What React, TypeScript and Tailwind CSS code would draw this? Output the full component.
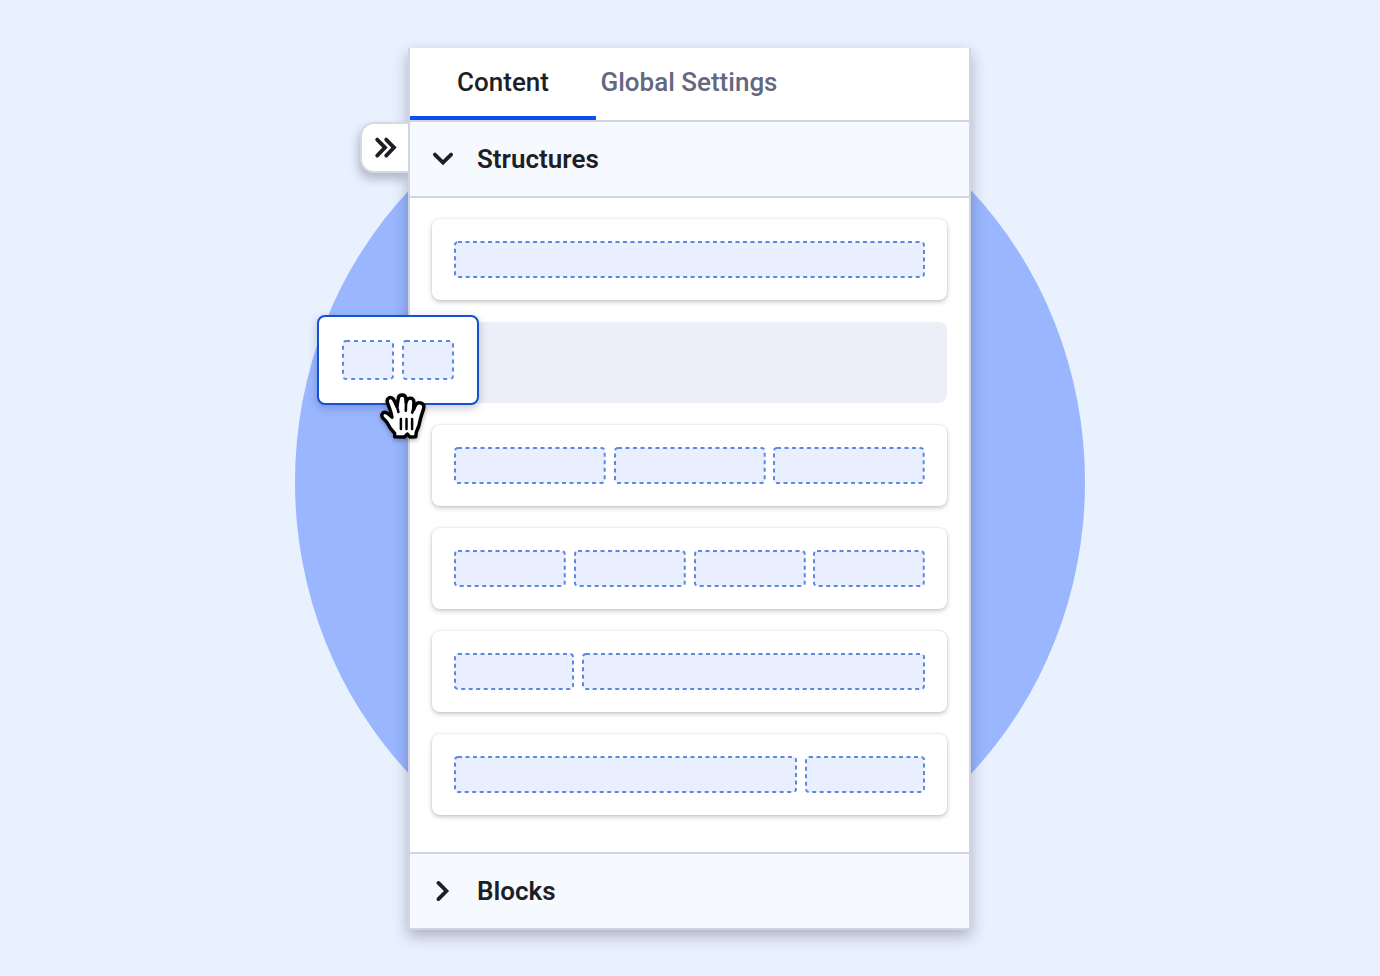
import { useState } from 'react'
import clsx from 'clsx'

type Structure = {
  id: string
  name: string
  cells: string[]
}

const STRUCTURES: Structure[] = [
  { id: 'one', name: 'One column', cells: ['flex-1'] },
  { id: 'two', name: 'Two columns', cells: ['flex-1', 'flex-1'] },
  { id: 'three', name: 'Three columns', cells: ['flex-1', 'flex-1', 'flex-1'] },
  { id: 'four', name: 'Four columns', cells: ['flex-1', 'flex-1', 'flex-1', 'flex-1'] },
  { id: 'left', name: 'Narrow left column', cells: ['w-[120px]', 'flex-1'] },
  { id: 'right', name: 'Narrow right column', cells: ['flex-1', 'w-[120px]'] },
]

const DRAGGED_ID = 'two'

function Cell({ className, dash }: { className: string; dash: string }) {
  return (
    <div className={className}>
      <svg className="block h-full w-full overflow-visible" aria-hidden="true">
        <rect
          x="1"
          y="1"
          rx="3"
          className="h-[calc(100%-2px)] w-[calc(100%-2px)] fill-[#e9effe] stroke-[#5b87e6]"
          strokeWidth="2"
          strokeDasharray={dash}
        />
      </svg>
    </div>
  )
}

function StructureCard({ structure }: { structure: Structure }) {
  return (
    <div
      draggable
      aria-label={structure.name}
      className="flex h-[81px] cursor-grab gap-2 rounded-lg bg-white p-[22px] shadow-[0_2px_5px_rgba(0,0,0,0.22),0_0_2px_rgba(0,0,0,0.12)]"
    >
      {structure.cells.map((cell, i) => (
        <Cell key={i} className={cell} dash="4 3.5" />
      ))}
    </div>
  )
}

function DraggedCard({ structure }: { structure: Structure }) {
  return (
    <div className="absolute -top-[7px] -left-[115px] z-10 flex h-[90px] w-[162px] gap-2 rounded-lg border-2 border-[#1450d2] bg-white px-[23px] py-[23px] shadow-[0_3px_8px_rgba(20,40,100,0.25)]">
      {structure.cells.map((cell, i) => (
        <Cell key={i} className={cell} dash="4 4" />
      ))}
      <GrabHand />
    </div>
  )
}

function GrabHand() {
  return (
    <svg
      viewBox="0 0 46 46"
      className="absolute top-[76px] left-[61px] size-[46px] overflow-visible drop-shadow-[0_2px_2px_rgba(0,0,0,0.3)]"
      aria-hidden="true"
    >
      <path
        d="M14.8 43.8 L14.6 40.2 C12.2 37.4 9.8 35.2 8.4 31.8 C7.2 28.9 5 27.2 3 25.2 C0.4 22.4 2.6 18.4 6.2 19.6 C8.4 20.4 10.3 22.3 12 24.2 C11.2 18.8 9.3 14.4 7.5 9.8 C5.9 5.2 10.8 2.7 13.4 6.3 C14.7 8.3 15.7 11 16.9 13.6 L18.3 5.5 C18.8 0.9 25.4 0.8 25.8 5.4 L26.1 9.4 C27 3.9 33.6 3.7 33.9 8.8 L33.6 16.6 C34.4 14.4 35 12.7 36.2 11.2 C38.8 8.1 44.6 10.3 43.8 14.6 C42.9 19.2 40.3 24.3 39.7 29.3 C39.2 33.7 37 36.5 36.2 39.7 L35.8 43.8 L30 44 L27.4 41 L24.6 44 Z"
        fill="white"
        stroke="black"
        strokeWidth="3.4"
        strokeLinejoin="round"
      />
      <path
        d="M16.9 13 L18.4 19 M26.1 9 L25.8 17.8 M33.6 15 L32.2 19.6"
        fill="none"
        stroke="black"
        strokeWidth="2.6"
        strokeLinecap="round"
      />
      <path
        d="M20.9 26 V36 M26.5 26 V36 M32.1 26 V36"
        fill="none"
        stroke="black"
        strokeWidth="2.5"
        strokeLinecap="round"
      />
    </svg>
  )
}

function Chevron({ open }: { open: boolean }) {
  return (
    <svg
      viewBox="0 0 24 24"
      className="size-6"
      fill="none"
      stroke="currentColor"
      strokeWidth="3.8"
      strokeLinecap="round"
      aria-hidden="true"
    >
      <path d={open ? 'M3.9 7.6 L12 15.6 L20.1 7.6' : 'M7.4 3.9 L15.4 12 L7.4 20.1'} />
    </svg>
  )
}

function SectionHeader({ title, open, onToggle }: { title: string; open: boolean; onToggle: () => void }) {
  return (
    <h2>
      <button
        type="button"
        aria-expanded={open}
        onClick={onToggle}
        className="flex h-[74px] w-full items-center gap-[22px] bg-[#f6f9fe] px-[21px] text-left text-[26px] leading-8 font-semibold text-[#1c1f26]"
      >
        <Chevron open={open} />
        {title}
      </button>
    </h2>
  )
}

export default function App() {
  const [tab, setTab] = useState('Content')
  const [open, setOpen] = useState({ structures: true, blocks: false })

  return (
    <main className="relative flex min-h-screen items-start justify-center overflow-hidden bg-[#e9f0fe] pt-12 pr-px pb-11 font-['Roboto','Noto_Sans',sans-serif]">
      <div className="absolute top-[67px] left-1/2 h-[830px] w-[790px] -translate-x-1/2 rounded-[50%] bg-[#99b6ff]" />

      <section className="relative w-[563px] border-x-2 border-b-2 border-[#cfd5e2] bg-white shadow-[0_6px_14px_rgba(40,45,70,0.32)]">
        <button
          type="button"
          aria-label="Collapse panel"
          className="absolute top-[74px] right-full mr-0.5 flex h-[51px] w-12 items-center justify-center rounded-l-[14px] border-2 border-r-0 border-[#d5d9e4] bg-white text-[#1c1f26] shadow-[-2px_6px_10px_rgba(40,45,70,0.28)] [clip-path:inset(-20px_0_-20px_-20px)]"
        >
          <svg
            viewBox="0 0 24 24"
            className="size-6"
            fill="none"
            stroke="currentColor"
            strokeWidth="3.8"
            strokeLinecap="round"
            aria-hidden="true"
          >
            <path d="M4.2 3.6 L12 11.6 L4.2 19.6 M13.2 3.6 L21 11.6 L13.2 19.6" />
          </svg>
        </button>

        <div role="tablist" className="flex h-[74px] border-b-2 border-[#cfd5e2]">
          {['Content', 'Global Settings'].map((name) => (
            <button
              key={name}
              type="button"
              role="tab"
              aria-selected={tab === name}
              onClick={() => setTab(name)}
              className={clsx(
                'w-[186px] border-b-4 text-[26px] leading-8 font-medium whitespace-nowrap',
                tab === name ? 'border-[#0b50ee] text-[#1c1f26]' : 'border-transparent text-[#636880]',
              )}
            >
              {name}
            </button>
          ))}
        </div>

        <SectionHeader
          title="Structures"
          open={open.structures}
          onToggle={() => setOpen({ ...open, structures: !open.structures })}
        />
        {open.structures && (
          <ul className="flex flex-col gap-[22px] border-t-2 border-[#cfd5e2] px-[22px] pt-[21px] pb-[37px]">
            {STRUCTURES.map((structure) =>
              structure.id === DRAGGED_ID ? (
                <li key={structure.id} className="relative h-[81px] rounded-lg bg-[#eceff8]">
                  <DraggedCard structure={structure} />
                </li>
              ) : (
                <li key={structure.id}>
                  <StructureCard structure={structure} />
                </li>
              ),
            )}
          </ul>
        )}
        <div className="border-t-2 border-[#cfd5e2]">
          <SectionHeader
            title="Blocks"
            open={open.blocks}
            onToggle={() => setOpen({ ...open, blocks: !open.blocks })}
          />
        </div>
      </section>
    </main>
  )
}
